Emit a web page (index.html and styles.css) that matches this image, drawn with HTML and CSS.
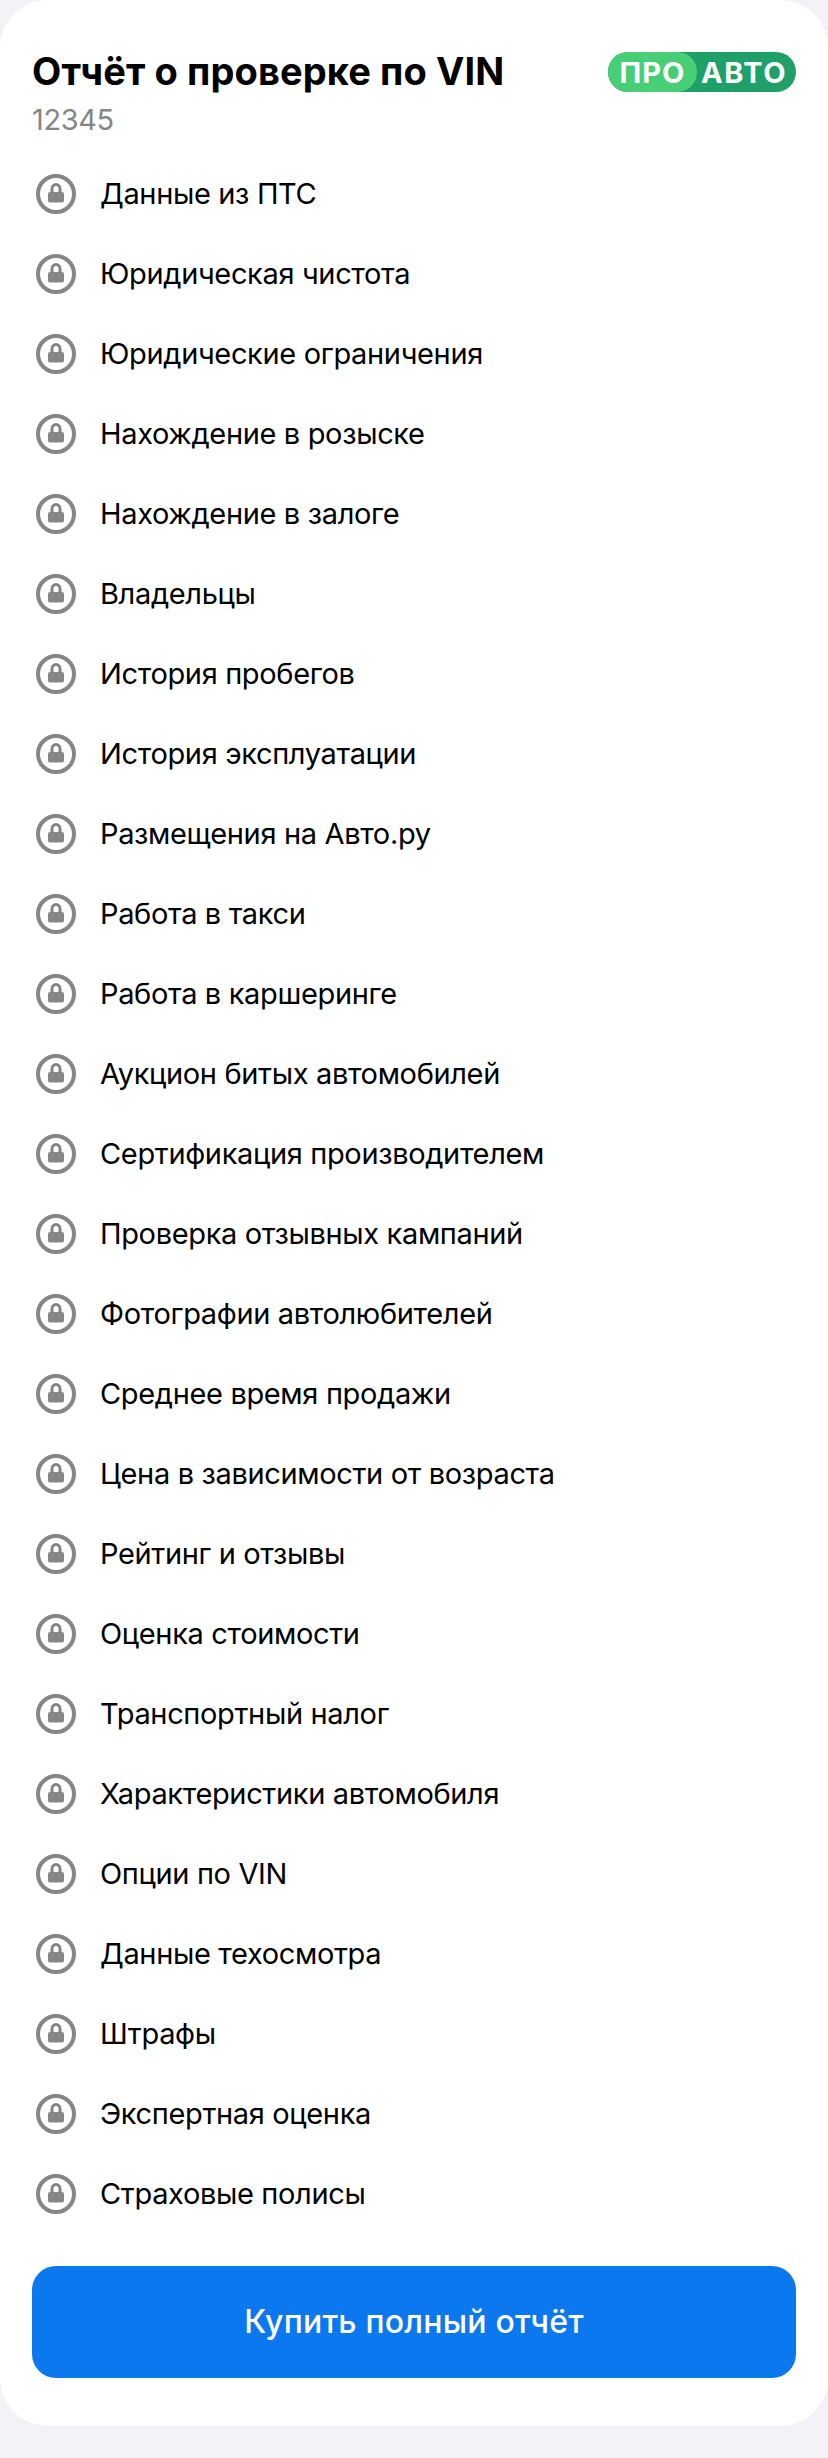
FILE: index.html
```html
<!doctype html>
<html lang="ru">

<head>
    <meta charset="utf-8" />
    <meta name="viewport" content="width=device-width, initial-scale=1" />
    <title>Отчёт о проверке по VIN</title>
    <link rel="stylesheet" href="styles.css">
</head>

<body>
    <svg class="sprite" width="0" height="0">
        <symbol id="lock" viewBox="0 0 40 40">
            <circle cx="20" cy="20" r="18" fill="none" stroke="#868686" stroke-width="4" />
            <path d="M16 19v-4.4a4 4 0 0 1 8 0v4.4" fill="none" stroke="#868686" stroke-width="3" />
            <rect x="12" y="18" width="16" height="10.5" rx="2" fill="#868686" />
        </symbol>
    </svg>

    <main class="card">
        <header class="head">
            <div>
                <h1 class="title">Отчёт о проверке по VIN</h1>
                <p class="vin">12345</p>
            </div>
            <div class="badge">
                <span class="badge-pro">ПРО</span>
                <span class="badge-auto">АВТО</span>
            </div>
        </header>

        <ul class="list">
            <li class="row"><svg class="lock"><use href="#lock" /></svg>Данные из ПТС</li>
            <li class="row"><svg class="lock"><use href="#lock" /></svg>Юридическая чистота</li>
            <li class="row"><svg class="lock"><use href="#lock" /></svg>Юридические ограничения</li>
            <li class="row"><svg class="lock"><use href="#lock" /></svg>Нахождение в розыске</li>
            <li class="row"><svg class="lock"><use href="#lock" /></svg>Нахождение в залоге</li>
            <li class="row"><svg class="lock"><use href="#lock" /></svg>Владельцы</li>
            <li class="row"><svg class="lock"><use href="#lock" /></svg>История пробегов</li>
            <li class="row"><svg class="lock"><use href="#lock" /></svg>История эксплуатации</li>
            <li class="row"><svg class="lock"><use href="#lock" /></svg>Размещения на Авто.ру</li>
            <li class="row"><svg class="lock"><use href="#lock" /></svg>Работа в такси</li>
            <li class="row"><svg class="lock"><use href="#lock" /></svg>Работа в каршеринге</li>
            <li class="row"><svg class="lock"><use href="#lock" /></svg>Аукцион битых автомобилей</li>
            <li class="row"><svg class="lock"><use href="#lock" /></svg>Сертификация производителем</li>
            <li class="row"><svg class="lock"><use href="#lock" /></svg>Проверка отзывных кампаний</li>
            <li class="row"><svg class="lock"><use href="#lock" /></svg>Фотографии автолюбителей</li>
            <li class="row"><svg class="lock"><use href="#lock" /></svg>Среднее время продажи</li>
            <li class="row"><svg class="lock"><use href="#lock" /></svg>Цена в зависимости от возраста</li>
            <li class="row"><svg class="lock"><use href="#lock" /></svg>Рейтинг и отзывы</li>
            <li class="row"><svg class="lock"><use href="#lock" /></svg>Оценка стоимости</li>
            <li class="row"><svg class="lock"><use href="#lock" /></svg>Транспортный налог</li>
            <li class="row"><svg class="lock"><use href="#lock" /></svg>Характеристики автомобиля</li>
            <li class="row"><svg class="lock"><use href="#lock" /></svg>Опции по VIN</li>
            <li class="row"><svg class="lock"><use href="#lock" /></svg>Данные техосмотра</li>
            <li class="row"><svg class="lock"><use href="#lock" /></svg>Штрафы</li>
            <li class="row"><svg class="lock"><use href="#lock" /></svg>Экспертная оценка</li>
            <li class="row"><svg class="lock"><use href="#lock" /></svg>Страховые полисы</li>
        </ul>

        <button class="buy">Купить полный отчёт</button>
    </main>
</body>

</html>
```

FILE: styles.css
```css
html,
body {
    margin: 0;
    padding: 0;
}

body {
    height: 2458px;
    background-color: #f2f2f7;
    font-family: Inter, "Noto Sans", sans-serif;
    color: #000;
}

.sprite {
    display: block;
    height: 0;
}

.card {
    box-sizing: border-box;
    height: 2426px;
    padding: 48px 32px 48px;
    background-color: #fff;
    border-radius: 48px;
}

.head {
    display: flex;
    justify-content: space-between;
    align-items: flex-start;
    height: 106px;
}

.title {
    margin: 0;
    font-size: 38px;
    line-height: 46px;
    font-weight: 700;
    letter-spacing: 0.1px;
}

.vin {
    margin: 0;
    margin-top: 8px;
    font-size: 29px;
    line-height: 36px;
    color: #868686;
    letter-spacing: -0.4px;
}

.badge {
    display: flex;
    align-items: center;
    width: 188px;
    height: 40px;
    margin-top: 4px;
    border-radius: 20px;
    background-color: #1fa068;
    color: #fff;
    font-size: 29px;
    font-weight: 700;
}

.badge-pro {
    display: flex;
    align-items: center;
    justify-content: center;
    width: 89px;
    height: 40px;
    border-radius: 20px;
    background-color: #48cf76;
    letter-spacing: 1px;
}

.badge-auto {
    flex: 1;
    padding-left: 4px;
    text-align: left;
    letter-spacing: 1.5px;
}

.list {
    list-style: none;
    margin: 0;
    padding: 0;
}

.row {
    display: flex;
    align-items: center;
    box-sizing: border-box;
    height: 80px;
    padding-bottom: 2px;
    font-size: 29px;
    letter-spacing: -0.35px;
}

.lock {
    width: 40px;
    height: 40px;
    margin: 2px 24px 0 4px;
    flex-shrink: 0;
}

.buy {
    display: block;
    width: 100%;
    height: 112px;
    margin-top: 32px;
    padding: 0 0 2px;
    background-color: #0c78f0;
    color: #fff;
    border: none;
    border-radius: 24px;
    font-family: inherit;
    font-size: 32px;
    font-weight: 500;
    letter-spacing: 0.2px;
    cursor: pointer;
}
```
